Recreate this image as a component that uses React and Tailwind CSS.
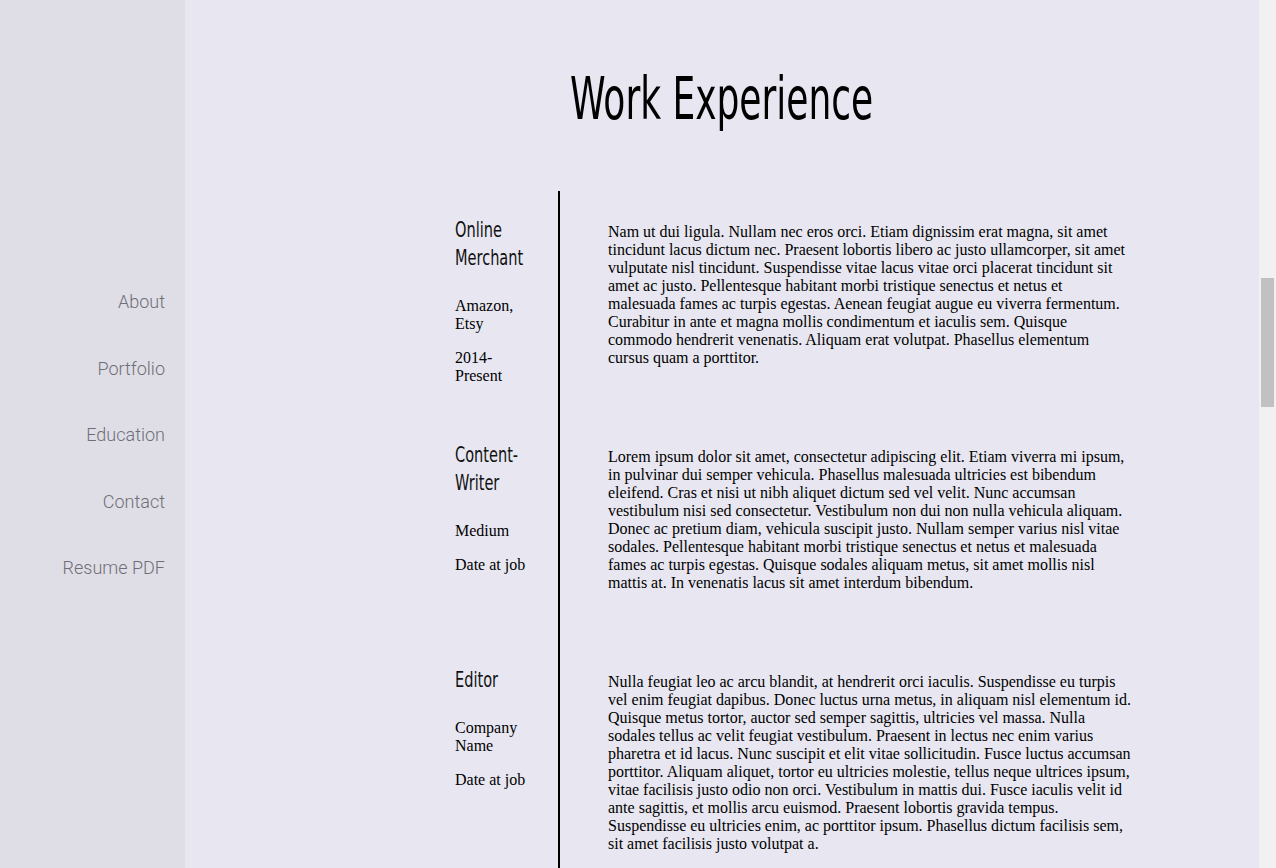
const navItems = ['About', 'Portfolio', 'Education', 'Contact', 'Resume PDF']

const jobs = [
  {
    title: 'Online Merchant',
    company: 'Amazon, Etsy',
    date: '2014-Present',
    text: 'Nam ut dui ligula. Nullam nec eros orci. Etiam dignissim erat magna, sit amet tincidunt lacus dictum nec. Praesent lobortis libero ac justo ullamcorper, sit amet vulputate nisl tincidunt. Suspendisse vitae lacus vitae orci placerat tincidunt sit amet ac justo. Pellentesque habitant morbi tristique senectus et netus et malesuada fames ac turpis egestas. Aenean feugiat augue eu viverra fermentum. Curabitur in ante et magna mollis condimentum et iaculis sem. Quisque commodo hendrerit venenatis. Aliquam erat volutpat. Phasellus elementum cursus quam a porttitor.',
  },
  {
    title: 'Content-Writer',
    company: 'Medium',
    date: 'Date at job',
    text: 'Lorem ipsum dolor sit amet, consectetur adipiscing elit. Etiam viverra mi ipsum, in pulvinar dui semper vehicula. Phasellus malesuada ultricies est bibendum eleifend. Cras et nisi ut nibh aliquet dictum sed vel velit. Nunc accumsan vestibulum nisi sed consectetur. Vestibulum non dui non nulla vehicula aliquam. Donec ac pretium diam, vehicula suscipit justo. Nullam semper varius nisl vitae sodales. Pellentesque habitant morbi tristique senectus et netus et malesuada fames ac turpis egestas. Quisque sodales aliquam metus, sit amet mollis nisl mattis at. In venenatis lacus sit amet interdum bibendum.',
  },
  {
    title: 'Editor',
    company: 'Company Name',
    date: 'Date at job',
    text: 'Nulla feugiat leo ac arcu blandit, at hendrerit orci iaculis. Suspendisse eu turpis vel enim feugiat dapibus. Donec luctus urna metus, in aliquam nisl elementum id. Quisque metus tortor, auctor sed semper sagittis, ultricies vel massa. Nulla sodales tellus ac velit feugiat vestibulum. Praesent in lectus nec enim varius pharetra et id lacus. Nunc suscipit et elit vitae sollicitudin. Fusce luctus accumsan porttitor. Aliquam aliquet, tortor eu ultricies molestie, tellus neque ultrices ipsum, vitae facilisis justo odio non orci. Vestibulum in mattis dui. Fusce iaculis velit id ante sagittis, et mollis arcu euismod. Praesent lobortis gravida tempus. Suspendisse eu ultricies enim, ac porttitor ipsum. Phasellus dictum facilisis sem, sit amet facilisis justo volutpat a.',
  },
]

const condensed = "font-['Liberation_Sans_Narrow','DejaVu_Sans_Condensed','Liberation_Sans',sans-serif]"

function App() {
  return (
    <div className="flex h-[868px] w-full overflow-hidden bg-[#e8e7f1] font-['Liberation_Serif',serif] text-black">
      {/* Sidebar */}
      <div className="flex w-[185px] shrink-0 flex-col items-end gap-[45.5px] bg-[#dfdee7] pr-5 pt-[291px] font-['Roboto',sans-serif] text-[18px] font-light leading-[21px] text-[#6f6e76]">
        {navItems.map((item) => (
          <a key={item} className="cursor-pointer">
            {item}
          </a>
        ))}
      </div>

      {/* Main */}
      <div className="flex-1 overflow-hidden">
        <div className="pt-[70px] text-center">
          <h1 className={`${condensed} inline-block scale-x-[0.69] text-[58px] leading-none`}>
            Work Experience
          </h1>
        </div>

        <div className="ml-[270px] mt-[63px] flex">
          <div className="w-[103px] shrink-0 pt-[25px]">
            {jobs.map((job) => (
              <div key={job.title} className="h-[225px] w-[80px]">
                <h2 className={`${condensed} origin-left scale-x-[0.77] text-[21px] leading-[28px] text-[#111]`}>
                  {job.title}
                </h2>
                <p className="mt-[25px] text-base leading-[18px]">{job.company}</p>
                <p className="mt-4 text-base leading-[18px]">{job.date}</p>
              </div>
            ))}
          </div>
          <div className="min-h-[700px] border-l-2 border-black pl-12 pt-[32px]">
            {jobs.map((job) => (
              <div key={job.title} className="h-[225px] w-[524px]">
                <p className="text-base leading-[18px]">{job.text}</p>
              </div>
            ))}
          </div>
        </div>
      </div>

      {/* Scrollbar */}
      <div className="w-[17px] shrink-0 bg-[#f1f1f1] pt-[278px]">
        <div className="mx-[2px] h-[129px] bg-[#c1c1c1]" />
      </div>
    </div>
  )
}

export default App
